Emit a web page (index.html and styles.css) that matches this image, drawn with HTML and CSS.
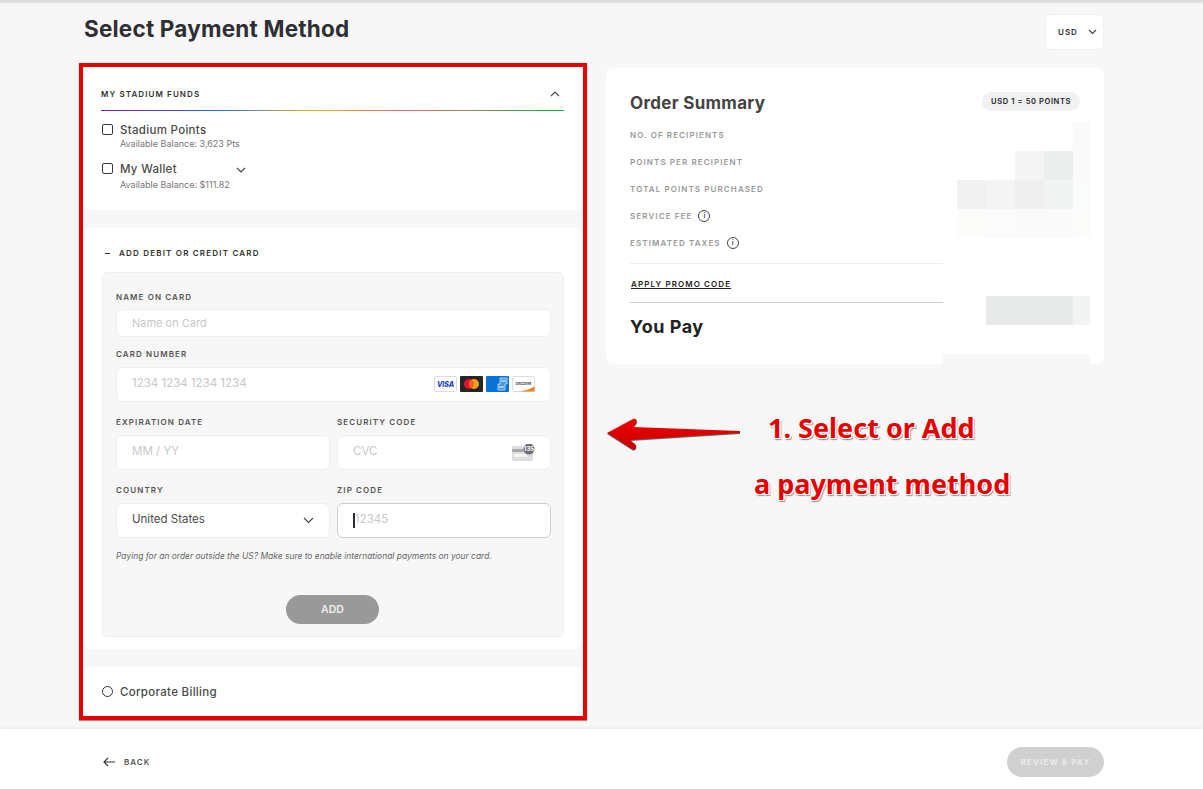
FILE: index.html
```html
<!DOCTYPE html>
<html lang="en">
<head>
    <meta charset="UTF-8">
    <meta name="viewport" content="width=device-width, initial-scale=1.0">
    <title>Select Payment Method</title>
    <link rel="stylesheet" href="styles.css">
</head>
<body>

<div class="page">
    <div class="top-strip"></div>

    <div class="wrap">
        <div class="page-head">
            <h1>Select Payment Method</h1>
            <div class="currency">
                <span>USD</span>
                <svg class="chev" width="9" height="6" viewBox="0 0 9 6"><path d="M1 1l3.5 3.5L8 1"/></svg>
            </div>
        </div>

        <div class="columns">
            <div class="left-col">
                <!-- Funds -->
                <div class="card funds">
                    <div class="funds-head">
                        <span>MY STADIUM FUNDS</span>
                        <svg class="chev" width="10" height="6" viewBox="0 0 10 6"><path d="M1 5l4-4 4 4"/></svg>
                    </div>
                    <div class="rainbow"></div>
                    <div class="fund-row">
                        <span class="checkbox"></span>
                        <div>
                            <div class="fund-name">Stadium Points</div>
                            <div class="fund-balance">Available Balance: 3,623 Pts</div>
                        </div>
                    </div>
                    <div class="fund-row wallet-row">
                        <span class="checkbox"></span>
                        <div>
                            <div class="fund-name">My Wallet
                                <svg class="chev wallet-chev" width="10" height="6" viewBox="0 0 10 6"><path d="M1 1l4 4 4-4"/></svg>
                            </div>
                            <div class="fund-balance">Available Balance: $111.82</div>
                        </div>
                    </div>
                </div>

                <!-- Add card -->
                <div class="card add-card">
                    <div class="add-head"><span class="minus"></span>ADD DEBIT OR CREDIT CARD</div>
                    <div class="card-form">
                        <div class="label label-tight">NAME ON CARD</div>
                        <div class="input input-short"><span class="ph">Name on Card</span></div>

                        <div class="label">CARD NUMBER</div>
                        <div class="input">
                            <span class="ph">1234 1234 1234 1234</span>
                            <div class="brands">
                                <svg width="23" height="16" viewBox="0 0 23 16"><rect x=".5" y=".5" width="22" height="15" rx="1" fill="#fff" stroke="#ddd"/><text x="11.5" y="11" text-anchor="middle" class="visa">VISA</text></svg>
                                <svg width="23" height="16" viewBox="0 0 23 16"><rect width="23" height="16" rx="1" fill="#252525"/><circle cx="9" cy="8" r="5" fill="#e8112d"/><circle cx="14" cy="8" r="5" fill="#f79e1b"/><path d="M11.5 3.7a5 5 0 0 1 0 8.6 5 5 0 0 1 0-8.6z" fill="#f4601f"/></svg>
                                <svg width="23" height="16" viewBox="0 0 23 16"><rect width="23" height="16" rx="1" fill="#0a74d6"/><path d="M14 2h7v6h-2v6h-7V8h2z" fill="#fff" fill-opacity=".25" stroke="#e4f0fb" stroke-width=".7"/><path d="M15 5h5M13 11h5" stroke="#fff" stroke-width="1.200"/></svg>
                                <svg width="23" height="16" viewBox="0 0 23 16"><rect x=".5" y=".5" width="22" height="15" rx="1" fill="#fff" stroke="#ddd"/><text x="11.5" y="9" text-anchor="middle" class="discover">DISCOVER</text><path d="M8 15.5c6-1 11-3 14.500-5v5z" fill="#f08020"/></svg>
                            </div>
                        </div>

                        <div class="field-grid">
                            <div>
                                <div class="label">EXPIRATION DATE</div>
                                <div class="input"><span class="ph">MM / YY</span></div>
                            </div>
                            <div>
                                <div class="label">SECURITY CODE</div>
                                <div class="input">
                                    <span class="ph">CVC</span>
                                    <svg class="cvc-icon" width="23" height="17" viewBox="0 0 23 17"><rect y="2" width="21" height="15" rx="1.500" fill="#dedee0"/><rect y="5" width="21" height="3" fill="#a8a8aa"/><rect x="2" y="10" width="13" height="3" fill="#f4f4f4"/><circle cx="17" cy="5" r="5.500" fill="#6d6d75"/><text x="17" y="7" text-anchor="middle" class="cvc-num">135</text></svg>
                                </div>
                            </div>
                            <div>
                                <div class="label">COUNTRY</div>
                                <div class="input">
                                    <span class="select-val">United States</span>
                                    <svg class="chev" width="11" height="7" viewBox="0 0 11 7"><path d="M1 1l4.500 4.500L10 1"/></svg>
                                </div>
                            </div>
                            <div>
                                <div class="label">ZIP CODE</div>
                                <div class="input input-focus"><span class="caret"></span><span class="ph zip-ph">12345</span></div>
                            </div>
                        </div>

                        <p class="note">Paying for an order outside the US? Make sure to enable international payments on your card.</p>
                        <button class="add-btn">ADD</button>
                    </div>
                </div>

                <!-- Corporate -->
                <div class="card corporate">
                    <span class="radio"></span>
                    <span class="fund-name">Corporate Billing</span>
                </div>
            </div>

            <div class="card summary">
                <div class="summary-head">
                    <h2>Order Summary</h2>
                    <span class="rate">USD 1 = 50 POINTS</span>
                </div>
                <div class="line">NO. OF RECIPIENTS</div>
                <div class="line">POINTS PER RECIPIENT</div>
                <div class="line">TOTAL POINTS PURCHASED</div>
                <div class="line">SERVICE FEE <span class="info">i</span></div>
                <div class="line">ESTIMATED TAXES <span class="info">i</span></div>
                <div class="promo"><a href="#">APPLY PROMO CODE</a></div>
                <h2 class="you-pay">You Pay</h2>

                <!-- blurred amounts -->
                <div class="mosaic">
                    <i></i><i></i><i></i><i></i><i></i><i class="s1"></i>
                    <i></i><i></i><i></i><i class="s2"></i><i class="s3"></i><i class="s1"></i>
                    <i></i><i class="s4"></i><i class="s2"></i><i class="s5"></i><i class="s6"></i><i class="s7"></i>
                    <i></i><i class="s8"></i><i class="s9"></i><i class="s1"></i><i class="s1"></i><i class="s8"></i>
                    <i></i><i></i><i></i><i></i><i></i><i></i>
                    <i></i><i></i><i></i><i></i><i></i><i></i>
                    <i></i><i></i><i class="s10"></i><i class="s10"></i><i class="s10"></i><i class="s6"></i>
                    <i></i><i></i><i></i><i></i><i></i><i></i>
                    <i class="bg"></i><i class="bg"></i><i class="bg"></i><i class="bg"></i><i class="bg"></i><i class="bg"></i>
                </div>
            </div>
        </div>
    </div>

    <div class="footer">
        <a class="back" href="#">
            <svg width="12" height="10" viewBox="0 0 12 10"><path d="M5 1L1 5l4 4M1 5h11"/></svg>
            BACK
        </a>
        <button class="review-btn">REVIEW &amp; PAY</button>
    </div>

    <!-- Annotation layer -->
    <div class="red-frame"></div>
    <svg class="red-arrow" width="136" height="36" viewBox="0 0 136 36">
        <defs>
            <linearGradient id="arrowFill" x1="0" y1="0" x2="0" y2="1">
                <stop offset="0" stop-color="#f00000"/>
                <stop offset="1" stop-color="#c80000"/>
            </linearGradient>
        </defs>
        <path d="M1 16L27 2c3-1 5 2 3 5l-3 3 107 4v2L24 23l5 4c3 3 0 7-3 5z" fill="#666" transform="translate(0 1)"/>
        <path d="M1 16L27 2c3-1 5 2 3 5l-3 3 107 4v2L24 23l5 4c3 3 0 7-3 5z" fill="url(#arrowFill)"/>
    </svg>
    <div class="callout">
        <div class="callout-one">1. Select or Add</div>
        <div>a payment method</div>
    </div>
</div>

</body>
</html>
```

FILE: styles.css
```css
* {
    box-sizing: border-box;
}
body {
    margin: 0;
    font-family: "Inter", "Liberation Sans", sans-serif;
    background-color: #f7f7f7;
    color: #333;
}
.page {
    position: relative;
    width: 1203px;
    height: 789px;
    overflow: hidden;
    display: flex;
    flex-direction: column;
}
.top-strip {
    height: 2px;
    background-color: #ddd;
    box-shadow: 0 1px 2px rgba(0, 0, 0, 0.1);
}
.wrap {
    flex: 1;
    padding: 0 99px 0 83px;
}
.page-head {
    height: 65px;
    display: flex;
    justify-content: space-between;
    align-items: flex-start;
}
h1 {
    margin: 13px 0 0 1px;
    font-size: 22.5px;
    line-height: 28px;
    font-weight: 700;
    letter-spacing: 0.2px;
    color: #2f2f33;
}
.currency {
    margin-top: 12px;
    width: 59px;
    height: 36px;
    display: flex;
    align-items: center;
    gap: 10px;
    padding-left: 12px;
    background-color: #fff;
    border: 1px solid #f0f0f0;
    border-radius: 6px;
    font-size: 8px;
    font-weight: 600;
    letter-spacing: 1px;
}
.chev {
    fill: none;
    stroke: #444;
    stroke-width: 1.1;
}
.columns {
    display: grid;
    grid-template-columns: 500px 498px;
    gap: 23px;
    align-items: start;
}
.left-col {
    display: flex;
    flex-direction: column;
    gap: 18px;
}
.card {
    background-color: #fff;
    border-radius: 8px;
}

/* funds */
.funds {
    height: 143px;
    padding: 20px 19px 0 18px;
}
.funds-head {
    display: flex;
    justify-content: space-between;
    align-items: center;
    height: 14px;
    padding-right: 4px;
    font-size: 8px;
    font-weight: 600;
    letter-spacing: 1.1px;
    color: #333;
}
.rainbow {
    height: 1px;
    margin-top: 9px;
    background: linear-gradient(90deg, #8a12e0, #1c6df0 25%, #f0b400 46%, #f5606a 65%, #00c030 100%);
}
.fund-row {
    display: flex;
    gap: 7px;
    margin-top: 12px;
}
.checkbox {
    width: 11px;
    height: 11px;
    margin: 1px 0 0 1px;
    border: 1.5px solid #3a3a3a;
    border-radius: 2px;
}
.fund-name {
    font-size: 11.5px;
    line-height: 14px;
    font-weight: 500;
    letter-spacing: 0.3px;
    color: #4a4a4a;
}
.wallet-chev {
    margin-left: 56px;
}
.fund-balance {
    font-size: 9px;
    line-height: 12px;
    margin-top: 1px;
    color: #777;
}
.wallet-row .fund-balance {
    margin-top: 3px;
}

/* add card */
.add-card {
    height: 421px;
    padding: 20px 19px 0 19px;
}
.add-head {
    display: flex;
    align-items: center;
    height: 10px;
    font-size: 8px;
    font-weight: 600;
    letter-spacing: 1.2px;
    color: #333;
}
.minus {
    width: 5px;
    height: 1px;
    margin: 0 9px 0 3px;
    background-color: #333;
}
.card-form {
    height: 365px;
    margin-top: 14px;
    padding: 19px 12px 0 13px;
    background-color: #f7f7f7;
    border: 1px solid #eee;
    border-radius: 6px;
}
.label {
    font-size: 8px;
    line-height: 10px;
    font-weight: 600;
    letter-spacing: 1.1px;
    color: #555;
    margin-bottom: 8px;
}
.label-tight {
    margin-bottom: 7px;
}
.input {
    height: 35px;
    display: flex;
    justify-content: space-between;
    align-items: center;
    padding: 0 15px;
    background-color: #fff;
    border: 1px solid #eee;
    border-radius: 6px;
    margin-bottom: 15px;
}
.input-short {
    height: 28px;
    margin-bottom: 12px;
}
.ph {
    font-size: 11.5px;
    color: #c8c8c8;
    margin-top: -4px;
}
.input-short .ph {
    font-size: 11px;
    margin-top: 0;
}
.brands {
    display: flex;
    gap: 3px;
    margin-top: -1px;
}
.visa {
    font: italic 800 7px "Inter", sans-serif;
    fill: #1a3fb8;
}
.discover {
    font: 700 3px "Inter", sans-serif;
    fill: #333;
}
.cvc-num {
    font: 700 6px "Inter", sans-serif;
    fill: #fff;
}
.field-grid {
    display: grid;
    grid-template-columns: 214px 214px;
    column-gap: 7px;
}
.select-val {
    font-size: 11.5px;
    color: #4a4a4a;
    margin-top: -4px;
}
.input-focus {
    justify-content: flex-start;
    border-color: #ccc;
}
.caret {
    width: 2px;
    height: 15px;
    background-color: #2a2a3a;
    margin-top: -1px;
}
.note {
    margin: -2px 0 0;
    font-size: 8.45px;
    line-height: 10px;
    font-style: italic;
    color: #666;
}
button {
    font-family: inherit;
    border: none;
    border-radius: 15px;
}
.add-btn {
    display: block;
    width: 93px;
    height: 29px;
    margin: 34px 0 0 170px;
    background-color: #999;
    color: #eee;
    font-size: 10.5px;
    font-weight: 600;
}

/* corporate */
.corporate {
    height: 49px;
    display: flex;
    align-items: center;
    gap: 7px;
    padding-left: 19px;
}
.radio {
    width: 11px;
    height: 11px;
    border: 1.2px solid #333;
    border-radius: 50%;
}

/* summary */
.summary {
    position: relative;
    height: 296px;
    margin-top: 1px;
    padding: 24px 24px 0;
}
.summary-head {
    display: flex;
    justify-content: space-between;
    align-items: flex-start;
    margin-bottom: 7px;
}
h2 {
    margin: 0;
    font-size: 17px;
    line-height: 22px;
    font-weight: 700;
    letter-spacing: 0.3px;
    color: #444;
}
.rate {
    height: 19px;
    padding: 0 9px;
    line-height: 19px;
    border-radius: 10px;
    background-color: #f0f1f3;
    font-size: 7.5px;
    font-weight: 600;
    letter-spacing: 0.62px;
    color: #222;
}
.line {
    display: flex;
    align-items: center;
    gap: 6px;
    height: 27px;
    font-size: 8px;
    font-weight: 600;
    letter-spacing: 1.1px;
    color: #999;
}
.info {
    width: 12px;
    height: 12px;
    border: 1px solid #444;
    border-radius: 50%;
    text-align: center;
    font-size: 7px;
    line-height: 10px;
    letter-spacing: 0;
    color: #444;
}
.promo {
    margin-top: 7px;
    height: 40px;
    line-height: 40px;
    border-top: 1px solid #eee;
    border-bottom: 1px solid #ccc;
    font-size: 8px;
    font-weight: 600;
    letter-spacing: 1.1px;
}
.promo a {
    color: #222;
    margin-left: 1px;
}
.you-pay {
    margin-top: 13px;
    font-size: 18px;
    letter-spacing: 0.5px;
    color: #222;
}
.mosaic {
    position: absolute;
    top: 54px;
    left: 337px;
    width: 147px;
    height: 242px;
    display: grid;
    grid-template-columns: 14px 29px 29px 29px 29px 17px;
    grid-template-rows: repeat(8, 29px) 10px;
    background-color: #fff;
}
.s1 { background-color: #fafafa; }
.s2 { background-color: #f4f4f4; }
.s3 { background-color: #eceeed; }
.s4 { background-color: #f1f1f1; }
.s5 { background-color: #efefef; }
.s6 { background-color: #f2f3f3; }
.s7 { background-color: #fafbfb; }
.s8 { background-color: #fcfcfb; }
.s9 { background-color: #fbfbfb; }
.s10 { background-color: #e8e9e9; }
.bg { background-color: #f7f7f7; }

/* footer */
.footer {
    height: 60px;
    display: flex;
    justify-content: space-between;
    align-items: center;
    padding: 5px 99px 0 103px;
    background-color: #fff;
    box-shadow: 0 -1px 3px rgba(0, 0, 0, 0.06);
}
.back {
    display: flex;
    align-items: center;
    gap: 9px;
    font-size: 8px;
    font-weight: 600;
    letter-spacing: 1px;
    color: #555;
    text-decoration: none;
}
.back svg {
    fill: none;
    stroke: #333;
    stroke-width: 1.1;
}
.review-btn {
    width: 97px;
    height: 30px;
    background-color: #d0d0d0;
    color: #e8e8e8;
    font-size: 8px;
    font-weight: 800;
    letter-spacing: 1.1px;
}

/* annotation layer */
.red-frame {
    position: absolute;
    left: 79px;
    top: 63px;
    width: 508px;
    height: 657px;
    border: 4px solid #e60000;
    box-shadow: 0 1px 1px rgba(0, 0, 0, 0.4);
}
.red-arrow {
    position: absolute;
    left: 606px;
    top: 417px;
}
.callout {
    position: absolute;
    left: 754px;
    top: 400px;
    font-family: "Noto Sans", "Open Sans", sans-serif;
    font-size: 27px;
    line-height: 56px;
    font-weight: 700;
    white-space: nowrap;
    color: #e60000;
    text-shadow: 1px 0 0 #fff, -1px 0 0 #fff, 0 1px 0 #fff, 0 -1px 0 #fff, 1px 1px 0 #fff, -1px 1px 0 #fff, 1px -1px 0 #fff, -1px -1px 0 #fff, 2px 2px 1px #999, 0 2px 1px #999;
}
.callout-one {
    margin-left: 14px;
}
```
